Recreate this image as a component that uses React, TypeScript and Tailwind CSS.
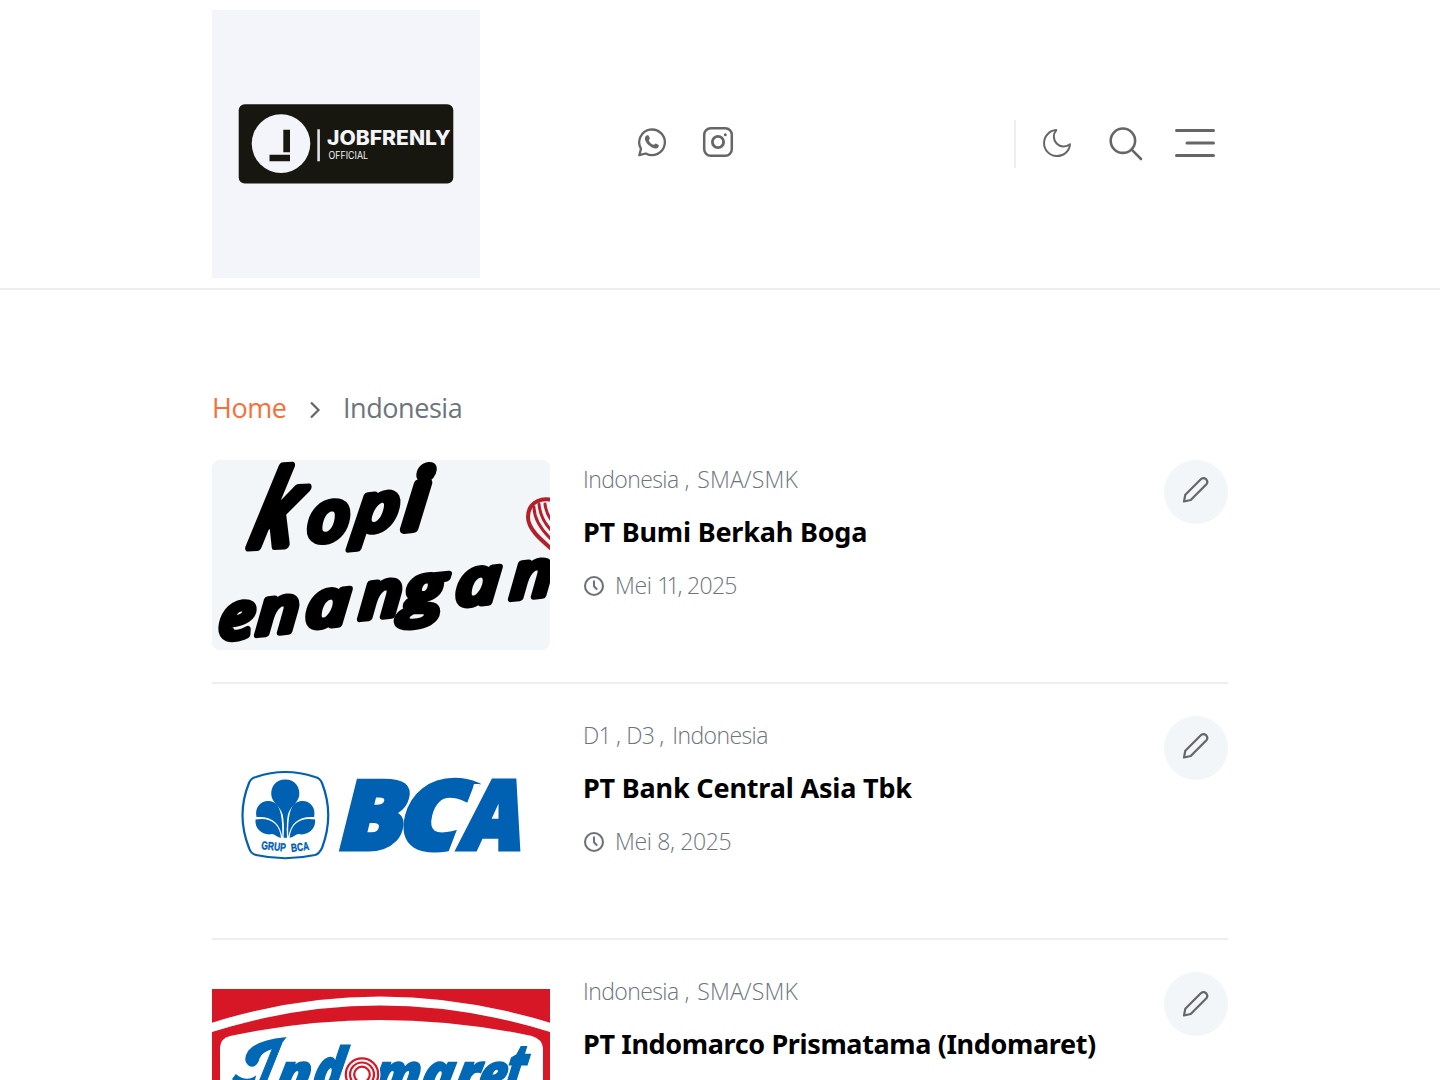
import type { ReactNode } from "react";

const ink = "#666666";

type LetterProps = {
  c: string;
  x: number;
  y: number;
  size: number;
  sx?: number;
  rot?: number;
  skew?: number;
  sw?: number;
};

function ScriptLetter({ c, x, y, size, sx = 1, rot = -6, skew = -9, sw = 6.5 }: LetterProps) {
  return (
    <text
      transform={`translate(${x} ${y}) rotate(${rot}) skewX(${skew}) scale(${sx} 1)`}
      fontSize={size}
      strokeWidth={sw}
      strokeLinejoin="round"
      fontFamily="'Open Sans', sans-serif"
      fontStyle="italic"
      fontWeight={600}
    >
      {c}
    </text>
  );
}

function JobfrenlyLogo() {
  return (
    <svg viewBox="0 0 268 268" className="size-[268px]" aria-label="Jobfrenly Official">
      <rect width="268" height="268" fill="#f3f5fa" />
      <rect x="26.7" y="94.3" width="214.6" height="79.2" rx="6" fill="#18170f" />
      <circle cx="69" cy="133.6" r="29.3" fill="#f3f5fa" />
      <path d="M71.3 119.8H78V142.3H71.3ZM57.5 144.8H78V151.2H57.5Z" fill="#18170f" />
      <rect x="105.3" y="119.3" width="2.6" height="32" fill="#dfe1e6" />
      <g fill="#f3f5fa" fontFamily="Inter, sans-serif">
        <text x="115" y="135" fontSize="20" fontWeight={800} textLength="123.5" lengthAdjust="spacingAndGlyphs">JOBFRENLY</text>
        <text x="116.5" y="148.6" fontSize="10" fontWeight={400} textLength="39.5" lengthAdjust="spacingAndGlyphs">OFFICIAL</text>
      </g>
    </svg>
  );
}

function KopiPicture() {
  return (
    <svg viewBox="0 0 338 190" className="h-[190px] w-[338px] rounded-lg">
      <rect width="338" height="190" fill="#f2f6f9" />
      <g stroke="#b3202a" strokeWidth="3" fill="none" strokeLinecap="round">
        <path d="M345 42C331 35 316 42 316 57C316 69 328 79 342 91" strokeWidth="4" />
        <path d="M322 47C322 60 331 72 342 82M327 44C328 56 335 67 343 74M333 44C334 52 338 60 344 65" />
      </g>
      <g fill="#000" stroke="#000">
        <ScriptLetter c="k" x={35} y={87} size={103} sx={0.8} skew={-17} sw={9} rot={-3} />
        <ScriptLetter c="o" x={94} y={83} size={70} sx={1.08} />
        <ScriptLetter c="p" x={141} y={73} size={66} sx={1.16} skew={-12} />
        <ScriptLetter c="i" x={191} y={69} size={79} sw={10} skew={-12} />
        <ScriptLetter c="e" x={6} y={180} size={63} sx={1.08} />
        <ScriptLetter c="n" x={44} y={175} size={63} sx={1.14} />
        <ScriptLetter c="a" x={93} y={168} size={63} sx={1.2} />
        <ScriptLetter c="n" x={147} y={159} size={63} sx={1.14} />
        <ScriptLetter c="g" x={190} y={153} size={63} sx={1.25} />
        <ScriptLetter c="a" x={243} y={146} size={63} sx={1.2} />
        <ScriptLetter c="n" x={298} y={139} size={63} sx={1.14} />
      </g>
    </svg>
  );
}

function BcaPicture() {
  return (
    <svg viewBox="0 0 338 190" className="h-[190px] w-[338px] rounded-lg">
      <path
        d="M44 61Q73 51 103 61Q108 62 110 67Q122.500 99 110 132Q107 138 103 139Q73 145.500 44 139Q39 138 37 132Q24 99 37 67Q39 62 44 61Z"
        fill="none"
        stroke="#0060b2"
        strokeWidth="2.200"
      />
      <g fill="#0060b2">
        <path d="M73.300 63.500C83 63.500 88 71 87.300 79C86.500 87 78 90 75.800 99C75 103 74.800 108 74.600 112H72C71.800 108 71.600 103 70.800 99C68.600 90 60 87 59.300 79C58.600 71 63.600 63.500 73.300 63.500Z" />
        <path d="M44.500 101C42.500 92 48 85 56 85C66 85 71 93 70.300 121C68 107 60 100 44.500 101Z" />
        <path d="M43.500 103.500C58 101 67.500 107 69 121.700C65 121.500 63.500 118.500 60 118C52 120 42.500 114 43.500 103.500Z" />
        <path d="M102.100 101C104.100 92 98.600 85 90.600 85C80.600 85 75.600 93 76.300 121C78.600 107 86.600 100 102.100 101Z" />
        <path d="M103.100 103.500C88.600 101 79.100 107 77.600 121.700C81.600 121.500 83.100 118.500 86.600 118C94.600 120 104.100 114 103.100 103.500Z" />
        <path d="M72.300 104H74.300L75 121.700H71.600Z" />
      </g>
      <g fill="#0060b2" fontFamily="'Liberation Sans', sans-serif" fontWeight={700}>
        <text transform="translate(49 133) rotate(6)" fontSize="11.500" textLength="24.500" lengthAdjust="spacingAndGlyphs" stroke="#0060b2" strokeWidth="0.4">GRUP</text>
        <text transform="translate(79.500 136) rotate(-7)" fontSize="11.500" textLength="18" lengthAdjust="spacingAndGlyphs" stroke="#0060b2" strokeWidth="0.4">BCA</text>
      </g>
      <g fill="#0060b2" stroke="#0060b2" strokeWidth="5" fontFamily="'Open Sans', sans-serif" fontWeight={800} fontSize="95">
        <text transform="translate(122.500 133) skewX(-14) scale(1.02 1)">B</text>
        <text transform="translate(182 133) skewX(-14) scale(1.14 1)">C</text>
        <path d="M236 137L260.500 73L262 68H268L260 100L245 137Z" fill="#fff" stroke="none" />
        <text transform="translate(246 133) skewX(-13) scale(0.87 1)">A</text>
      </g>
    </svg>
  );
}

const scriptText = {
  fontFamily: "'Open Sans', sans-serif",
  fontStyle: "italic",
  fontWeight: 800,
  fontSize: 55,
} as const;

function IndomaretPicture() {
  return (
    <svg viewBox="0 0 338 190" className="h-[190px] w-[338px] rounded-lg">
      <rect y="17" width="338" height="156" fill="#d71626" />
      <path d="M-2 56Q167 2 340 56" fill="none" stroke="#fff" strokeWidth="9" />
      <path d="M8 190V75Q9 66 18 64Q167 32 320 64Q330 67 331 76V190Z" fill="#fff" />
      <g fill="#0068b4" stroke="#0068b4" strokeWidth="1.500">
        <text transform="translate(42 121) skewX(-16) scale(0.68 1.25)" {...scriptText}>I</text>
        <path d="M73 66L66 75Q48 78 46 89Q43 96 37 93Q31 88 37 79Q45 69 73 66Z" />
        <path d="M21 107L24 103Q34 111 43 105L40 116Q30 117 21 107Z" />
        <text transform="translate(62 121) skewX(-10) scale(1.02 1)" {...scriptText}>n</text>
        <text transform="translate(98 121) skewX(-10) scale(0.9 1.14)" {...scriptText}>d</text>
        <text transform="translate(159 121) skewX(-10) scale(0.93 1)" {...scriptText}>m</text>
        <text transform="translate(207 121) skewX(-10) scale(0.98 1)" {...scriptText}>a</text>
        <text transform="translate(241 121) skewX(-10) scale(1 1)" {...scriptText}>r</text>
        <text transform="translate(264 121) skewX(-10) scale(0.9 1)" {...scriptText}>e</text>
        <text transform="translate(291 121) skewX(-10) scale(0.8 1.26)" {...scriptText}>t</text>
      </g>
      <circle cx="150" cy="102.500" r="18.500" fill="#fff" />
      <g fill="none" stroke="#d71626" strokeWidth="2.200">
        <circle cx="150" cy="102.500" r="16.200" />
        <circle cx="150" cy="102.500" r="12" />
        <circle cx="150" cy="102.500" r="7.800" />
      </g>
    </svg>
  );
}

function WhatsappIcon() {
  return (
    <svg viewBox="0 0 32 32" className="size-8" fill="none" stroke={ink} strokeWidth="2.300" strokeLinejoin="round">
      <path d="M3.300 29.200L5 22.800A12.800 12.800 0 1 1 9.800 27.500Z" />
      <path d="M11.200 9.200C12.200 9 12.700 9.500 13.100 10.600L13.800 12.300C14 13.200 12.700 13.800 12.800 14.400C13.700 16.400 15.500 18 17.800 18.800C18.500 18.900 19 17.400 19.800 17.500L22.300 18.700C23 19.200 22.900 19.900 22.500 20.900C21.700 22.200 20 22.700 18.200 22.200C14 21 10.400 17.700 9.100 14C8.500 11.900 9.400 9.600 11.200 9.200Z" fill={ink} stroke="none" />
    </svg>
  );
}

function InstagramIcon() {
  return (
    <svg viewBox="0 0 32 32" className="size-8" fill="none" stroke={ink}>
      <rect x="2.200" y="2.200" width="27.600" height="27.600" rx="6.500" strokeWidth="2.500" />
      <circle cx="16" cy="16" r="5.600" strokeWidth="2.800" />
      <circle cx="23.300" cy="8.700" r="1.500" fill={ink} stroke="none" />
    </svg>
  );
}

function MoonIcon() {
  return (
    <svg viewBox="0 0 32 32" className="size-8" fill="none" stroke={ink} strokeWidth="2" strokeLinejoin="round">
      <path d="M15.300 3.100A13 13 0 1 0 29 17.300A9.900 9.900 0 0 1 15.300 3.100Z" />
    </svg>
  );
}

function SearchIcon() {
  return (
    <svg viewBox="0 0 36 36" className="size-9" fill="none" stroke={ink} strokeWidth="2.600" strokeLinecap="round">
      <circle cx="13.900" cy="15.700" r="12.200" />
      <path d="M22.700 24.700L32 34" />
    </svg>
  );
}

function MenuIcon() {
  return (
    <svg viewBox="0 0 40 30" className="h-[30px] w-10" fill="none" stroke={ink} strokeWidth="3" strokeLinecap="round">
      <path d="M1.500 2.500H38.500M12 15H38.500M1.500 27.500H38.500" />
    </svg>
  );
}

function ClockIcon() {
  return (
    <svg viewBox="0 0 22 22" className="size-[22px]" fill="none" stroke="#6c757d" strokeWidth="2.100" strokeLinecap="round" strokeLinejoin="round">
      <circle cx="11" cy="11" r="9" />
      <path d="M11 6.200V11.200L13.600 14" />
    </svg>
  );
}

function PencilIcon() {
  return (
    <svg viewBox="0 0 28 28" className="size-7" fill="none" stroke={ink} strokeWidth="2.200" strokeLinejoin="round">
      <path d="M2 25.500L3.300 18.800L19.100 3Q21.500 1 24.100 3.200Q26.400 5.800 24.400 8.200L8.700 24L2 25.500Z" />
    </svg>
  );
}

type Post = {
  labels: ReactNode;
  title: string;
  titleClass: string;
  date: ReactNode;
  buttonClass: string;
  picture: ReactNode;
};

const country = <span className="tracking-[-0.6px]">Indonesia</span>;

const schoolLabels = (
  <>
    {country} , <span className="ml-0.5 tracking-[0.1px]">SMA/SMK</span>
  </>
);

const posts: Post[] = [
  {
    labels: schoolLabels,
    title: "PT Bumi Berkah Boga",
    titleClass: "tracking-[-0.2px]",
    date: (
      <>
        Mei <span className="tracking-[-4px]">11</span>
        <span className="ml-0.5 tracking-[-0.7px]">, 2025</span>
      </>
    ),
    buttonClass: "pb-1",
    picture: <KopiPicture />,
  },
  {
    labels: (
      <>
        <span className="tracking-[-0.8px]">
          D1 , <span className="ml-px">D3 ,</span>
        </span>
        <span className="ml-[3px]"> {country}</span>
      </>
    ),
    title: "PT Bank Central Asia Tbk",
    titleClass: "tracking-[-0.18px]",
    date: "Mei 8, 2025",
    buttonClass: "pb-1",
    picture: <BcaPicture />,
  },
  {
    labels: schoolLabels,
    title: "PT Indomarco Prismatama (Indomaret)",
    titleClass: "tracking-[-0.37px]",
    date: "Mei 8, 2025",
    buttonClass: "",
    picture: <IndomaretPicture />,
  },
];

function PostRow({ post }: { post: Post }) {
  return (
    <article className="flex h-56 shrink-0 items-start border-b-2 border-[#eeeeee]">
      {post.picture}
      <div className="ml-[33px] flex-1 whitespace-nowrap">
        <p className="mt-[3px] h-8 text-[23px] leading-8 font-light text-[#6c757d]">{post.labels}</p>
        <h2 className={`mt-[17px] h-10 font-['Noto_Sans',sans-serif] text-[27px] leading-10 font-bold text-black ${post.titleClass}`}>{post.title}</h2>
        <div className="mt-[18px] flex h-8 items-center gap-[10px]">
          <ClockIcon />
          <time className="-mt-0.5 text-[23px] leading-8 font-light tracking-[-0.35px] text-[#6c757d]">{post.date}</time>
        </div>
      </div>
      <button aria-label="Edit" className={`flex size-16 items-center justify-center rounded-full bg-[#f2f6f9] ${post.buttonClass}`}>
        <PencilIcon />
      </button>
    </article>
  );
}

export default function App() {
  return (
    <div className="flex h-[1080px] flex-col overflow-hidden bg-white font-['Open_Sans',sans-serif]">
      <header className="h-[290px] shrink-0 border-b-2 border-[#eeeeee]">
        <div className="mx-auto flex h-72 w-[1016px] items-center">
          <JobfrenlyLogo />
          <nav className="ml-[156px] flex items-center gap-[34px] pb-1">
            <WhatsappIcon />
            <InstagramIcon />
          </nav>
          <div className="ml-auto flex h-12 items-center border-l-2 border-[#eeeeee] pr-[13px] pb-0.5 pl-[25px]">
            <MoonIcon />
            <div className="ml-9"><SearchIcon /></div>
            <div className="ml-[30px]"><MenuIcon /></div>
          </div>
        </div>
      </header>
      <main className="mx-auto flex w-[1016px] flex-1 flex-col">
        <nav className="mt-[98px] flex h-10 shrink-0 items-center text-[27px] tracking-[-0.45px]">
          <a className="w-[75px] text-[#fa6e38]">Home</a>
          <svg viewBox="0 0 12 18" className="mt-1 ml-[21.5px] h-[18px] w-3" fill="none" stroke={ink} strokeWidth="2.200">
            <path d="M2 1.500L9.500 9L2 16.500" />
          </svg>
          <span className="ml-[22.5px] text-[#6c757d]">Indonesia</span>
        </nav>
        <div className="mt-8 flex flex-col gap-8">
          {posts.map((post) => (
            <PostRow key={post.title} post={post} />
          ))}
        </div>
      </main>
    </div>
  );
}
